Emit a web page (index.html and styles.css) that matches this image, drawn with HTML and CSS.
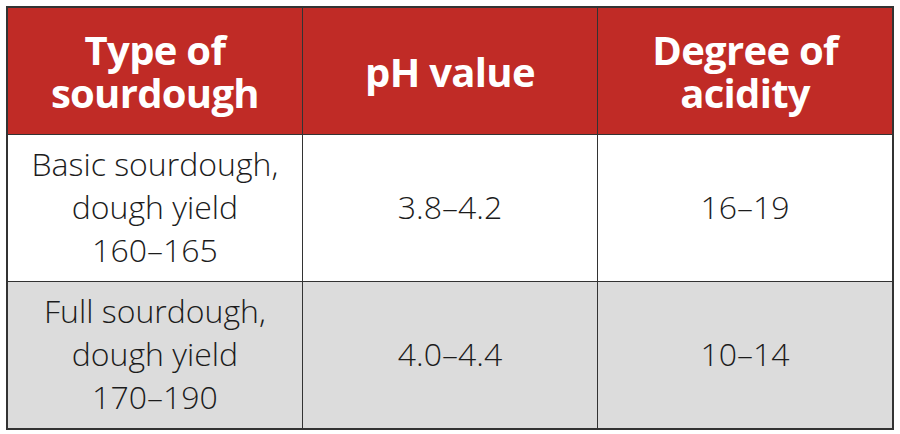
FILE: index.html
```html
<!DOCTYPE html>
<html lang="en">
<head>
<meta charset="utf-8">
<title>Sourdough acidity</title>
<link rel="stylesheet" href="styles.css">
</head>
<body>
<table class="sour-table">
  <thead>
    <tr class="head-row">
      <th>Type of<br>sourdough</th>
      <th>pH value</th>
      <th>Degree of<br>acidity</th>
    </tr>
  </thead>
  <tbody>
    <tr class="row-white">
      <td>Basic sourdough,<br>dough yield<br>160–165</td>
      <td>3.8–4.2</td>
      <td>16–19</td>
    </tr>
    <tr class="row-grey">
      <td>Full sourdough,<br>dough yield<br>170–190</td>
      <td>4.0–4.4</td>
      <td>10–14</td>
    </tr>
  </tbody>
</table>
</body>
</html>
```
FILE: styles.css
```css
html, body {
  margin: 0;
  padding: 0;
  background: #ffffff;
}
body {
  padding: 6px 0 0 6px;
}
.sour-table {
  border-collapse: collapse;
  width: 888px;
  table-layout: fixed;
  border: 2px solid #333333;
}
.sour-table th,
.sour-table td {
  border: 1px solid #333333;
  text-align: center;
  vertical-align: middle;
  padding: 0;
}
.head-row th {
  background: #c02b26;
  color: #ffffff;
  font-family: "Open Sans", "Liberation Sans", sans-serif;
  font-weight: 700;
  font-size: 40px;
  letter-spacing: -0.7px;
  line-height: 43px;
  height: 126px;
}
.sour-table td {
  font-family: "Open Sans", "Liberation Sans", sans-serif;
  font-weight: 300;
  font-size: 32px;
  line-height: 43px;
  color: #1c1c1c;
  height: 143px;
  padding-bottom: 3px;
}
.row-white td {
  background: #ffffff;
}
.row-grey td {
  background: #dcdcdc;
}
```
